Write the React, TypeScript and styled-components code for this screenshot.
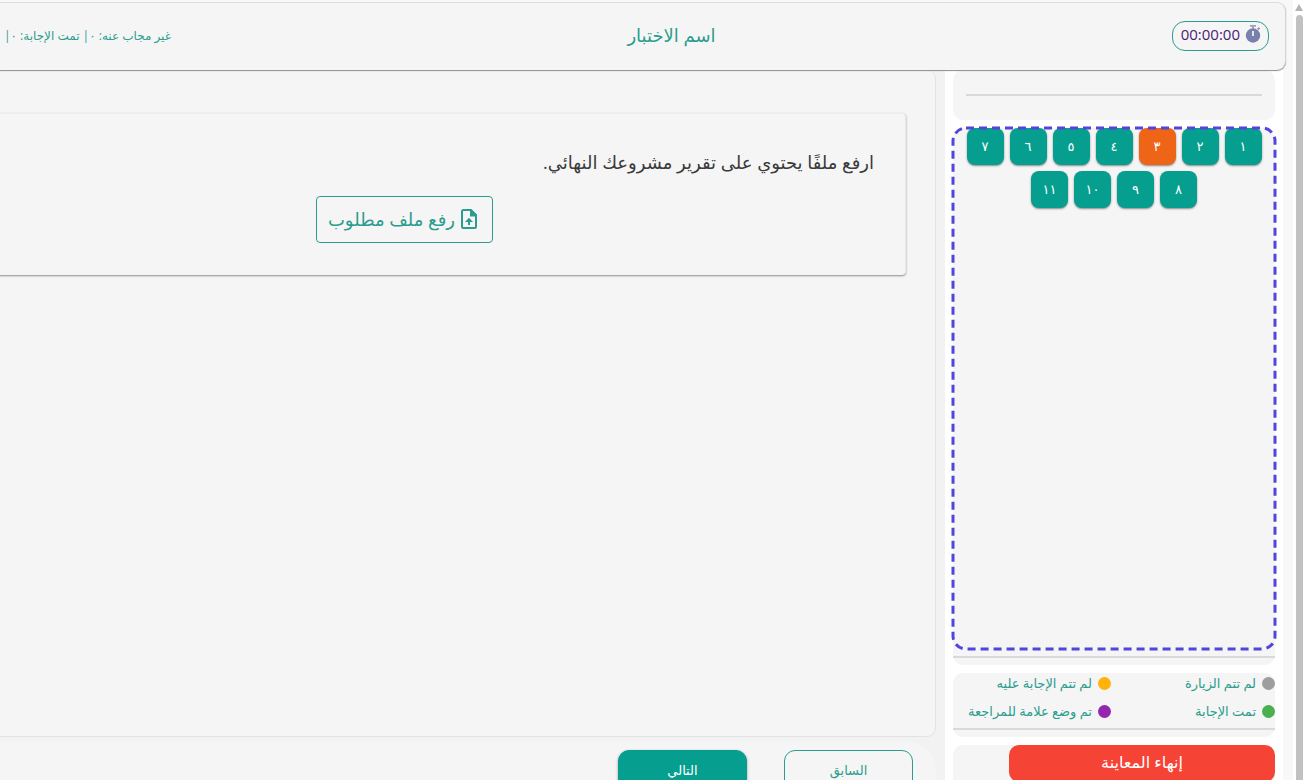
import React from "react";
import styled, { createGlobalStyle } from "styled-components";

const teal = "#069e8e";
const tealText = "#2b9d8e";
const surface = "#f5f5f5";

const GlobalStyle = createGlobalStyle`
  * { box-sizing: border-box; }
  body {
    margin: 0;
    overflow: hidden;
    background: #f8f8f8;
    font-family: "Open Sans", "DejaVu Sans", sans-serif;
  }
  button { font-family: inherit; cursor: pointer; }
`;

const Window = styled.div`
  display: flex;
  height: 100vh;
  overflow: hidden;
`;

const Scrollbar = styled.div`
  flex: 0 0 12px;
  display: flex;
  flex-direction: column;
  align-items: center;
  gap: 4px;
  padding-top: 4px;
  background: #fff;
`;

const ScrollArrow = styled.div`
  border: 4px solid transparent;
  border-top: 0;
  border-bottom: 7px solid #b4b4b4;
`;

const ScrollThumb = styled.div`
  flex: 1;
  width: 7px;
  border-radius: 4px 4px 0 0;
  background: #c1c1c1;
`;

const Page = styled.div`
  flex: 1;
  min-width: 0;
  height: calc(100vh + 24px);
  display: flex;
  flex-direction: column;
  padding: 2px 7px 0 0;
`;

const Header = styled.header`
  position: relative;
  z-index: 1;
  flex: 0 0 68px;
  display: flex;
  align-items: center;
  justify-content: space-between;
  padding: 0 16px 2px 0;
  overflow: hidden;
  background: ${surface};
  border-top: 1px solid #dcdcdc;
  border-right: 1px solid #d4d4d4;
  border-radius: 0 9px 9px 0;
  box-shadow: 0 1px 1px #8c8c8c;
`;

const Timer = styled.div`
  display: flex;
  align-items: center;
  justify-content: flex-start;
  gap: 5px;
  width: 97px;
  height: 30px;
  padding: 0 7px 3px 0;
  border: 1px solid ${tealText};
  border-radius: 13px;
  color: #4c1a78;
  font-size: 15px;
`;

const Title = styled.h1`
  margin: 0;
  padding-bottom: 2px;
  color: ${tealText};
  font-size: 18px;
  font-weight: 400;
`;

const Status = styled.div`
  flex: 0 0 171px;
  color: ${tealText};
  font-size: 12px;
  white-space: nowrap;
`;

const Body = styled.div`
  flex: 1;
  min-height: 0;
  display: flex;
`;

const Sidebar = styled.aside`
  flex: 0 0 338px;
  display: flex;
  flex-direction: column;
  gap: 8px;
  margin-right: 3px;
  padding: 0 8px;
  background: #fff;
`;

const SidePanel = styled.section<{ $grow?: boolean }>`
  display: flex;
  flex-direction: column;
  flex: ${(p) => (p.$grow ? "1 1 0" : "0 0 auto")};
  border-radius: 10px;
  background: ${surface};
`;

const Divider = styled.hr<{ $inset?: boolean }>`
  width: ${(p) => (p.$inset ? "calc(100% - 26px)" : "100%")};
  height: 2px;
  margin: ${(p) => (p.$inset ? "24px auto" : "0 0 7px")};
  border: 0;
  background: #d9d9d9;
`;

const Highlight = styled.div`
  position: relative;
  flex: 1;
  margin-bottom: 7px;
`;

const DashFrame = styled.svg`
  position: absolute;
  top: 0;
  left: 0;
  width: 100%;
  height: 100%;
  overflow: visible;
  pointer-events: none;
`;

const NumberList = styled.nav`
  display: flex;
  flex-wrap: wrap;
  justify-content: center;
  gap: 6px;
  padding: 0 13px;
`;

const NumberButton = styled.button<{ $current?: boolean }>`
  width: 37px;
  height: 37px;
  padding: 0 0 2px;
  border: 0;
  border-radius: 8px;
  background: ${(p) => (p.$current ? "#ee6517" : teal)};
  color: #fff;
  font-size: 13px;
  box-shadow: 0 1px 2px #8a8a8a;
`;

const Legend = styled.ul`
  display: grid;
  grid-template-columns: 164px 1fr;
  row-gap: 8px;
  margin: 0;
  padding: 0 0 7px;
  list-style: none;
`;

const LegendItem = styled.li`
  display: flex;
  align-items: center;
  gap: 6px;
  height: 20px;
  color: ${tealText};
  font-size: 13px;
  white-space: nowrap;
`;

const Dot = styled.span<{ $color: string }>`
  flex: 0 0 13px;
  height: 13px;
  border-radius: 50%;
  background: ${(p) => p.$color};
`;

const Actions = styled(SidePanel)`
  min-height: 59px;
`;

const EndButton = styled.button`
  width: 266px;
  height: 37px;
  padding: 0 0 3px;
  border: 0;
  border-radius: 10px;
  background: #f54336;
  color: #fff;
  font-size: 16px;
`;

const Main = styled.main`
  flex: 1;
  min-width: 0;
  display: flex;
  flex-direction: column;
  gap: 4px;
  margin-left: -125px;
  padding-right: 9px;
  background: #f2f2f2;
`;

const QuestionPanel = styled.section`
  flex: 1;
  padding: 43px 29px 0;
  background: ${surface};
  border: 1px solid #e2e2e2;
  border-width: 0 1px 1px 0;
  border-radius: 0 9px 9px 0;
`;

const Card = styled.article`
  display: flex;
  flex-direction: column;
  align-items: center;
  gap: 15px;
  padding: 29px 31px 32px;
  border-top: 1px solid #ededed;
  border-right: 1px solid #e6e6e6;
  border-radius: 4px;
  box-shadow: 0 1px 2px #8c8c8c;
  background: ${surface};
`;

const Question = styled.p`
  align-self: stretch;
  margin: 0;
  color: #3a3a3a;
  font-size: 18px;
  line-height: 38px;
`;

const UploadButton = styled.button`
  display: flex;
  align-items: center;
  justify-content: flex-start;
  gap: 6px;
  width: 177px;
  height: 47px;
  padding: 0 15px 2px 0;
  border: 1px solid ${tealText};
  border-radius: 4px;
  background: transparent;
  color: ${tealText};
  font-size: 18px;
  white-space: nowrap;
`;

const Pager = styled.footer`
  flex: 0 0 63px;
  display: flex;
  align-items: flex-start;
  gap: 37px;
  padding: 9px 23px;
  border-radius: 0 30px 30px 0;
  background: ${surface};
`;

const PagerButton = styled.button<{ $primary?: boolean }>`
  width: 129px;
  height: 42px;
  padding: 0 0 2px;
  border: 1px solid ${(p) => (p.$primary ? teal : tealText)};
  border-radius: 11px;
  background: ${(p) => (p.$primary ? teal : "transparent")};
  color: ${(p) => (p.$primary ? "#fff" : tealText)};
  font-size: 13px;
  box-shadow: ${(p) => (p.$primary ? "0 1px 3px #a0a0a0" : "none")};
`;

const StopwatchIcon = () => (
  <svg width="16" height="18" viewBox="0 0 16 18" aria-hidden="true">
    <path d="M5 0h6v1.800H5z" fill="#9aa0c0" />
    <path d="M7 1.500h2v2H7z" fill="#9aa0c0" />
    <path d="M12.200 3.800l1.500-1.500 1.300 1.300-1.500 1.500z" fill="#7880ab" />
    <circle cx="8" cy="10.500" r="7.200" fill="#7880ab" />
    <path d="M7.200 6h1.600v5H7.200z" fill="#fff" />
  </svg>
);

const UploadFileIcon = () => (
  <svg width="16" height="20" viewBox="4 2 16 20" aria-hidden="true">
    <path
      d="M6.500 3h7.500l5 5v11.500a1.500 1.500 0 0 1-1.500 1.500h-11A1.500 1.500 0 0 1 5 19.500v-15A1.500 1.500 0 0 1 6.500 3z"
      fill="none"
      stroke="currentColor"
      strokeWidth="2"
    />
    <path d="M13 3h1.500L19.500 8v1.500H13z" fill="currentColor" />
    <path d="M12 10.800l4 4.200h-3v3h-2v-3H8z" fill="currentColor" />
  </svg>
);

const numbers = ["١", "٢", "٣", "٤", "٥", "٦", "٧", "٨", "٩", "١٠", "١١"];

const legend = [
  { color: "#9e9e9e", label: "لم تتم الزيارة" },
  { color: "#ffb20a", label: "لم تتم الإجابة عليه" },
  { color: "#4caf50", label: "تمت الإجابة" },
  { color: "#9527ae", label: "تم وضع علامة للمراجعة" },
];

export default function App() {
  return (
    <Window dir="rtl" lang="ar">
      <GlobalStyle />
      <Scrollbar aria-hidden="true">
        <ScrollArrow />
        <ScrollThumb />
      </Scrollbar>
      <Page>
        <Header>
          <Timer>
            <StopwatchIcon />
            <span dir="ltr">00:00:00</span>
          </Timer>
          <Title>اسم الاختبار</Title>
          <Status>غير مجاب عنه: ٠| تمت الإجابة: ٠|</Status>
        </Header>
        <Body>
          <Sidebar>
            <SidePanel>
              <Divider $inset />
            </SidePanel>
            <SidePanel $grow>
              <Highlight>
                <NumberList>
                  {numbers.map((n) => (
                    <NumberButton key={n} type="button" $current={n === "٣"}>
                      {n}
                    </NumberButton>
                  ))}
                </NumberList>
                <DashFrame aria-hidden="true">
                  <rect
                    width="100%"
                    height="100%"
                    rx="13"
                    fill="none"
                    stroke="#5145dc"
                    strokeWidth="3"
                    strokeDasharray="8 5"
                  />
                </DashFrame>
              </Highlight>
              <Divider />
            </SidePanel>
            <SidePanel>
              <Legend>
                {legend.map((item) => (
                  <LegendItem key={item.label}>
                    <Dot $color={item.color} />
                    {item.label}
                  </LegendItem>
                ))}
              </Legend>
              <Divider />
            </SidePanel>
            <Actions>
              <EndButton type="button">إنهاء المعاينة</EndButton>
            </Actions>
          </Sidebar>
          <Main>
            <QuestionPanel>
              <Card>
                <Question>ارفع ملفًا يحتوي على تقرير مشروعك النهائي.</Question>
                <UploadButton type="button">
                  <UploadFileIcon />
                  رفع ملف مطلوب
                </UploadButton>
              </Card>
            </QuestionPanel>
            <Pager>
              <PagerButton type="button">السابق</PagerButton>
              <PagerButton type="button" $primary>
                التالي
              </PagerButton>
            </Pager>
          </Main>
        </Body>
      </Page>
    </Window>
  );
}
